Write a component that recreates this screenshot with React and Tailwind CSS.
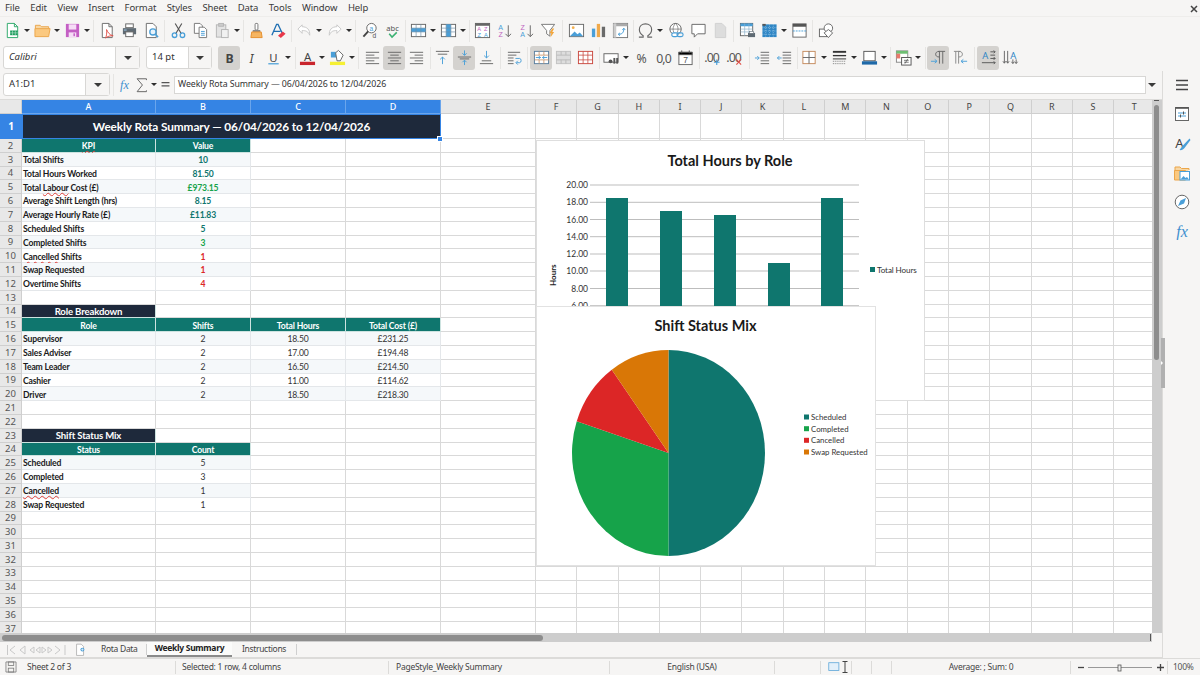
import React from 'react';

const B = '#4a9fd8';
const icons = {
  new: <><path d="M3.5 1.5h7.5l3.5 3.5v11.5h-11z" fill="#fff" stroke="#2aa868"/><path d="M11 1.5V5h3.5" fill="none" stroke="#2aa868"/><rect x="6.5" y="9" width="8" height="5" fill="#1f9d5f"/><path d="M9 9v5M12 9v5M6.5 11.5h8" stroke="#bfe6d2" strokeWidth=".6"/></>,
  open: <><path d="M1.5 7V3.5h5L8 5h7.5v2" fill="#f8d7a4" stroke="#eba64a"/><path d="M1 15.5V7h16l-1.5 8.5z" fill="#fbc980" stroke="#eba64a"/></>,
  save: <><rect x="2" y="2" width="14" height="14" fill="#c45fc4"/><rect x="5" y="2.5" width="8" height="5.5" fill="#f6dcf6"/><rect x="5" y="11" width="8" height="5" fill="#f6dcf6"/><rect x="10" y="12" width="1.6" height="3" fill="#c45fc4"/></>,
  pdf: <><path d="M3.5 1.5h7l3.5 3.5v11.5H3.5z" fill="#fff" stroke="#6a6a6a"/><path d="M10.5 1.5V5H14" fill="none" stroke="#6a6a6a"/><path d="M8 8c1.5 3 3 6 7 6.500-3 0-6 .5-8 2.500 1-2.500 1.500-5.500 1-9z" fill="none" stroke="#e0524a"/></>,
  print: <><rect x="5" y="2" width="8" height="4" fill="#fff" stroke="#666"/><path d="M2 6.500h14v6.500H2z" fill="#5f6a73"/><rect x="5" y="10.500" width="8" height="5" fill="#fff" stroke="#666"/><rect x="3" y="8" width="3" height="1" fill="#9fc8e8"/></>,
  preview: <><path d="M3.500 1.500h7l3.500 3.500v11.500H3.500z" fill="#fff" stroke="#6a6a6a"/><circle cx="10.500" cy="10.500" r="3.300" fill="#e8f3fb" stroke={B} strokeWidth="1.400"/><path d="M13 13l3 3" stroke={B} strokeWidth="1.600"/></>,
  cut: <><path d="M5.500 1.500l6.500 11M12.500 1.500L6 12.500" stroke="#555" strokeWidth="1.200"/><circle cx="4.800" cy="14" r="2.400" fill="none" stroke={B} strokeWidth="1.400"/><circle cx="13.200" cy="14" r="2.400" fill="none" stroke={B} strokeWidth="1.400"/></>,
  copy: <><path d="M2.500 1.500h6l2.500 2.500v8H2.500z" fill="#fff" stroke="#777"/><path d="M7.500 5.500h5.500l2.500 2.500v8.500h-8z" fill="#fff" stroke="#777"/><path d="M9.500 10h4M9.500 12h4M9.500 14h4" stroke={B}/></>,
  paste: <><rect x="2.500" y="3" width="10" height="13" fill="#e3e3e3" stroke="#b5b5b5"/><rect x="5" y="1.500" width="5" height="3" fill="#ccc" stroke="#b5b5b5"/><rect x="8" y="8" width="7" height="8.500" fill="#f1f1f1" stroke="#b5b5b5"/></>,
  brush: <><rect x="7.500" y="1.500" width="3" height="7" rx="1" fill="#fff" stroke="#777"/><path d="M5 8.500h8v2H5z" fill="#888"/><path d="M4 10.500h10l1 6H3z" fill="#f5b562" stroke="#e58e2c"/></>,
  clear: <><path d="M2 14L7 2.500h1.500L13 12M4 10h7" fill="none" stroke="#1f6fb2" strokeWidth="1.400"/><path d="M8.500 14.500l5-4.500 3 2.500-5 4.500z" fill="#e8384a"/></>,
  undo: <><path d="M6.500 3L2 7.500 6.500 12V9c4 0 6.500 1 8 5 .5-6-3-9-8-9z" fill="#fff" stroke="#c8c8c8"/></>,
  redo: <><path d="M11.500 3L16 7.500 11.500 12V9c-4 0-6.500 1-8 5-.5-6 3-9 8-9z" fill="#fff" stroke="#c8c8c8"/></>,
  find: <><circle cx="10" cy="6.500" r="5" fill="#fff" stroke="#666"/><path d="M6.500 10L1.500 15.500" stroke="#444" strokeWidth="2"/><text x="10" y="9" fontSize="7" textAnchor="middle" fill={B} fontFamily="Liberation Sans">a</text><text x="13" y="17" fontSize="7" textAnchor="middle" fill="#555" fontFamily="Liberation Sans">d</text></>,
  spell: <><text x="9" y="9" fontSize="8" textAnchor="middle" fill="#555" fontFamily="Noto Sans">abc</text><path d="M5.500 12.500l3 3.500 5-5" fill="none" stroke="#3bb273" strokeWidth="1.600"/></>,
  rows: <><rect x="1.500" y="2.500" width="15" height="13" fill="#fff" stroke="#666"/><rect x="1.500" y="6.500" width="15" height="4" fill={B}/><path d="M1.500 6.500h15M1.500 10.500h15M6.500 2.500v13M11.500 2.500v13" stroke="#6f8fa8" strokeWidth=".7"/></>,
  cols: <><rect x="1.500" y="2.500" width="15" height="13" fill="#fff" stroke="#666"/><rect x="6.500" y="2.500" width="5" height="13" fill={B}/><path d="M1.500 6.500h15M1.500 10.500h15M6.500 2.500v13M11.500 2.500v13" stroke="#6f8fa8" strokeWidth=".7"/></>,
  sort: <><rect x="1.500" y="1.500" width="15" height="15" fill="#fff" stroke="#666"/><rect x="1.500" y="1.500" width="15" height="2.500" fill="#666"/><text x="5.500" y="10" fontSize="6" textAnchor="middle" fill="#c063c0" fontFamily="Liberation Sans">A</text><text x="5.500" y="15.500" fontSize="6" textAnchor="middle" fill={B} fontFamily="Liberation Sans">Z</text><text x="12.500" y="10" fontSize="6" textAnchor="middle" fill="#c063c0" fontFamily="Liberation Sans">Z</text><text x="12.500" y="15.500" fontSize="6" textAnchor="middle" fill={B} fontFamily="Liberation Sans">A</text></>,
  asc: <><text x="5" y="8" fontSize="7.500" textAnchor="middle" fill={B} fontFamily="Liberation Sans">A</text><text x="5" y="16" fontSize="7.500" textAnchor="middle" fill="#c063c0" fontFamily="Liberation Sans">Z</text><path d="M13 3.500v12M10 12.500l3 3 3-3" fill="none" stroke="#666"/></>,
  desc: <><text x="5" y="8" fontSize="7.500" textAnchor="middle" fill="#c063c0" fontFamily="Liberation Sans">Z</text><text x="5" y="16" fontSize="7.500" textAnchor="middle" fill={B} fontFamily="Liberation Sans">A</text><path d="M13 3.500v12M10 12.500l3 3 3-3" fill="none" stroke="#666"/></>,
  filter: <><path d="M1.500 2.500h14L10.500 9v6L7 12.500V9z" fill="#fff" stroke="#777"/><path d="M13 7l-3 5h2l-1 4.500 4-6h-2l2-3.500z" fill="#f2a63c"/></>,
  image: <><rect x="1.500" y="2.500" width="15" height="13" fill="#fff" stroke="#6a6a6a"/><circle cx="5.500" cy="6" r="1.500" fill="#f4b04e"/><path d="M2 15l5-5 3 3 2.500-2 3.500 4z" fill={B}/></>,
  chart: <><rect x="2" y="7" width="3.500" height="9" fill={B}/><rect x="7.200" y="2" width="3.500" height="14" fill="#f0a94a"/><rect x="12.500" y="5" width="3.500" height="11" fill="#6a6a6a"/></>,
  pivot: <><rect x="1.500" y="1.500" width="15" height="15" fill="#fff" stroke="#777"/><rect x="1.500" y="1.500" width="15" height="3" fill="#aaa"/><rect x="1.500" y="1.500" width="3" height="15" fill="#ccc"/><path d="M7 13c4 0 5.500-2 5.500-6M11 8.500l1.500-2 1.500 2M8.500 11.500L6.500 13l2 1.500" fill="none" stroke={B}/></>,
  omega: <><path d="M2 16h4.500v-1.500C4 13 2.500 10.500 2.500 8 2.500 4.500 5.300 2 9 2s6.500 2.500 6.500 6c0 2.500-1.500 5-4 6.500V16H16" fill="none" stroke="#666" strokeWidth="1.200"/></>,
  link: <><circle cx="8" cy="7.500" r="6" fill="#fff" stroke="#666"/><path d="M2 7.500h12M8 1.500c-3.500 3.500-3.500 8.500 0 12M8 1.500c3.500 3.500 3.500 8.500 0 12" fill="none" stroke="#666" strokeWidth=".7"/><rect x="4" y="11.500" width="6.500" height="4" rx="2" fill="#fff" stroke={B} strokeWidth="1.200"/><rect x="9.500" y="11.500" width="6.500" height="4" rx="2" fill="none" stroke={B} strokeWidth="1.200"/></>,
  comment: <><path d="M2 2.500h14v10H8l-3.500 3.500v-3.500H2z" fill="#fff" stroke="#666"/></>,
  hdoc: <><path d="M3.500 1.500h7l4 4v11h-11z" fill="#ddd" stroke="#d0d0d0"/></>,
  parea: <><rect x="1.500" y="1.500" width="13" height="13" fill="#fff" stroke="#666"/><rect x="1.500" y="1.500" width="13" height="3" fill="#4a9fd8"/><path d="M1.500 7.500h13M1.500 10.500h13M6 1.500v13M10.500 1.500v13" stroke="#8ab0c8" strokeWidth=".7"/><path d="M9.500 11.500h7.500v4.500H9.500z" fill="#5f6a73"/><rect x="11" y="10" width="4.500" height="2" fill="#fff" stroke="#5f6a73" strokeWidth=".6"/></>,
  freeze: <><rect x="1.500" y="2.500" width="15" height="13.500" fill="#2f86c5"/><path d="M1.500 6h15M1.500 9.500h15M1.500 13h15M5 2.500V16M9 2.500V16M13 2.500V16" stroke="#bcdcf0" strokeWidth=".6" strokeDasharray="1 1"/><rect x="1.500" y="2" width="3.500" height="2" fill="#555"/></>,
  split: <><rect x="2" y="2" width="14" height="14" fill="#fff" stroke="#666"/><rect x="2" y="2" width="14" height="3" fill="#555"/><path d="M2 9.500h14" stroke={B} strokeDasharray="2 1"/></>,
  draw: <><rect x="1.500" y="7.500" width="8" height="8" fill="#fff" stroke="#666"/><circle cx="11" cy="6.500" r="4.500" fill="#fff" stroke="#666"/><path d="M11 8l4.500 3.500-4.500 5-4.500-5z" fill="#fff" stroke="#666"/></>,
  bold: <text x="9" y="14.500" fontSize="13" fontWeight="700" textAnchor="middle" fill="#444" fontFamily="Noto Sans">B</text>,
  italic: <text x="9" y="14.500" fontSize="13" fontStyle="italic" textAnchor="middle" fill="#444" fontFamily="Noto Sans">I</text>,
  under: <><text x="9" y="13.500" fontSize="12" textAnchor="middle" fill="#444" fontFamily="Noto Sans">U</text><rect x="3.500" y="15" width="11" height="1.300" fill={B}/></>,
  fcolor: <><text x="9" y="13" fontSize="12" textAnchor="middle" fill="#444" fontFamily="Noto Sans">A</text><rect x="1" y="13.500" width="16" height="3.500" fill="#c9252d"/></>,
  hcolor: <><rect x="1" y="13.500" width="16" height="3.500" fill="#f6f033"/><rect x="2" y="3" width="6" height="6" fill={B}/><path d="M7 4l3-2.500 5 5-3 6H8.500z" fill="#fff" stroke="#666"/></>,
  al: <path d="M2 3.500h14M2 6.500h9M2 9.500h14M2 12.500h9M2 15.500h14" stroke="#666"/>,
  ac: <path d="M2 3.500h14M4.500 6.500h9M2 9.500h14M4.500 12.500h9M2 15.500h14" stroke="#666"/>,
  ar: <path d="M2 3.500h14M7 6.500h9M2 9.500h14M7 12.500h9M2 15.500h14" stroke="#666"/>,
  vt: <><path d="M2 2.500h14M4 5.500h10" stroke="#666"/><path d="M9 16V8.500M6.500 11L9 8.500l2.500 2.500" fill="none" stroke={B}/></>,
  vc: <><path d="M2 8.500h14M4 10.500h10" stroke="#666"/><path d="M9 1.500v5M6.800 4.500L9 6.800l2.200-2.300M9 17v-5M6.800 14L9 11.800l2.200 2.200" fill="none" stroke={B}/></>,
  vb: <><path d="M4 12.500h10M2 15.500h14" stroke="#666"/><path d="M9 2v7.500M6.500 7L9 9.500 11.500 7" fill="none" stroke={B}/></>,
  wrap: <><path d="M2 3.500h13M2 6.500h9M2 9.500h6M2 12.500h6M2 15.500h6" stroke="#666"/><path d="M10 10h4.500c2 0 2 4.500 0 4.500H11M12.500 12.500l-2 2 2 2" fill="none" stroke={B}/></>,
  merge: <><rect x="1.500" y="2.500" width="15" height="13" fill="#fff" stroke="#5a7fa0"/><path d="M1.500 6.500h15M1.500 11.500h15M6.500 2.500v4M11.500 2.500v4M6.500 11.500v4M11.500 11.500v4" stroke="#c58a5c" strokeWidth=".8"/><path d="M3 9h5M10 9h5M6 7.500L8 9 6 10.500M12 7.500L10 9l2 1.500" fill="none" stroke={B}/></>,
  mergeg: <><rect x="1.500" y="2.500" width="15" height="13" fill="#ddd" stroke="#c2c2c2"/><path d="M1.500 6.500h15M1.500 11.500h15M6.500 2.500v4M11.500 2.500v4M6.500 11.500v4M11.500 11.500v4" stroke="#bbb"/></>,
  splitc: <><rect x="1.500" y="2.500" width="15" height="13" fill="#fff" stroke="#c9483f"/><path d="M1.500 6.500h15M1.500 11.500h15M6.500 2.500v13M11.500 2.500v13" stroke="#c9483f" strokeWidth=".8"/></>,
  curr: <><rect x="1" y="5" width="15" height="9" fill="#fff" stroke="#666"/><circle cx="8" cy="13" r="2" fill="#555"/><rect x="11" y="9.500" width="2" height="6" fill="#555"/><rect x="14" y="9.500" width="2" height="6" fill="#555"/></>,
  pct: <text x="9" y="14.500" fontSize="13" textAnchor="middle" fill="#555" fontFamily="Noto Sans">%</text>,
  num: <text x="9" y="14.500" fontSize="13" textAnchor="middle" fill="#555" fontFamily="Noto Sans" letterSpacing="-1">0,0</text>,
  date: <><rect x="2" y="3.500" width="14" height="13" fill="#fff" stroke="#666"/><path d="M2 3.500h14v2.500H2zM5 1.500v3M13 1.500v3" stroke="#555"/><text x="9" y="15" fontSize="9" textAnchor="middle" fill="#555" fontFamily="Liberation Sans">7</text></>,
  addd: <><text x="8" y="14" fontSize="13" textAnchor="middle" fill="#555" fontFamily="Noto Sans" letterSpacing="-1">.00</text><path d="M13.500 11v6M10.500 14h6" stroke={B} strokeWidth="1.200"/></>,
  deld: <><text x="8" y="14" fontSize="13" textAnchor="middle" fill="#555" fontFamily="Noto Sans" letterSpacing="-1">.00</text><path d="M11 11l5 5.500M16 11l-5 5.500" stroke="#e0524a" strokeWidth="1.200"/></>,
  ind: <><path d="M7 3.500h9M7 6.500h9M7 9.500h9M7 12.500h9M7 15.500h9" stroke="#666"/><path d="M1 9.500h4.500M3.500 7.500l2 2-2 2" fill="none" stroke={B}/></>,
  ded: <><path d="M7 3.500h9M7 6.500h9M7 9.500h9M7 12.500h9M7 15.500h9" stroke="#666"/><path d="M6 9.500H1.500M3.500 7.500l-2 2 2 2" fill="none" stroke={B}/></>,
  bord: <><rect x="2" y="2.500" width="13" height="13" fill="#fff" stroke="#c58a5c"/><path d="M8.500 2.500v13M2 9h13" stroke="#666"/></>,
  bstyle: <><path d="M2 3h14" stroke="#333" strokeWidth="2"/><path d="M2 7h14" stroke="#333" strokeWidth="1.400"/><path d="M2 10.500h14" stroke="#333"/><path d="M2 13h14M2 15.500h14" stroke="#777" strokeDasharray="1 1"/></>,
  bcolor: <><rect x="3" y="2.500" width="12" height="10" fill="#fff" stroke="#555"/><rect x="1" y="13" width="16" height="3.500" fill="#1f69a8"/></>,
  cond: <><rect x="1.500" y="2" width="12" height="12" fill="#fff" stroke="#888"/><rect x="1.500" y="2" width="12" height="3" fill="#6fbf73"/><rect x="1.500" y="5" width="4" height="5" fill="#e87a6c"/><rect x="7" y="9" width="10" height="8" fill="#fff" stroke="#555"/><path d="M9.500 12h5M9.500 14h5M13.500 10.500l-3 5" stroke="#555" strokeWidth=".8"/></>,
  ltr: <><path d="M9 2.500h7M10 2.500v13M13.500 2.500v13M10 2.500C7 2.500 6 4 6 5.500S7 8.500 10 8.500" fill="none" stroke="#666"/><path d="M1 13h6M5 11l2.500 2L5 15" fill="none" stroke={B}/></>,
  rtl: <><path d="M2 2.500h7M4 2.500v13M7 2.500v13M7 2.500c3 0 4 1.500 4 3S10 8.500 7 8.500" fill="none" stroke="#888"/><path d="M16 13h-6M12 11l-2.500 2 2.500 2" fill="none" stroke={B}/></>,
  th: <><text x="5.500" y="11" fontSize="10" textAnchor="middle" fill="#2f86c5" fontFamily="Noto Sans">A</text><path d="M11 3h5M11 6.500h5M11 10h5M2 14.500h14" fill="none" stroke="#555"/><path d="M14.500 1.500L16 3l-1.500 1.500M14.500 8.500L16 10l-1.500 1.500M14.500 13L16 14.500 14.500 16" fill="none" stroke="#555"/></>,
  tv: <><text x="12" y="10.700" fontSize="10" textAnchor="middle" fill="#2f86c5" fontFamily="Noto Sans">A</text><path d="M2.500 2v13M6 2v13M11.500 11v4M15 11v4" stroke="#666"/><path d="M1 13l1.500 2L4 13M4.500 13L6 15l1.500-2M10 13.500l1.500 2 1.500-2M13.500 13.500l1.500 2 1.500-2" fill="none" stroke="#666"/></>,
  fx: <text x="9" y="14" fontSize="13" fontStyle="italic" textAnchor="middle" fill="#3d8fcf" fontFamily="Liberation Serif">fx</text>,
  sum: <path d="M14 3.500V2H3.500l6 7-6 7.500H14V15" fill="none" stroke="#666" strokeWidth="1.100"/>,
  eq: <path d="M3.500 6.500h11M3.500 11h11" stroke="#555" strokeWidth="1.800"/>,
  burger: <path d="M3 4.500h12M3 9h12M3 13.500h12" stroke="#444" strokeWidth="1.500"/>,
  props: <><rect x="2.500" y="2.500" width="13" height="13" fill="#fff" stroke="#666"/><rect x="2.500" y="2" width="13" height="1.800" fill="#555"/><path d="M5 8h8M5 11h8" stroke={B}/><path d="M10.500 6.500v3M7.500 9.500v3" stroke="#555"/></>,
  styles: <><text x="6.500" y="14" fontSize="13" textAnchor="middle" fill="#444" fontFamily="Noto Sans">A</text><path d="M16.500 4.500L9.500 12c-1 1-2 3-3 4 2 .5 4-.5 5-2l6-8z" fill={B}/></>,
  gallery: <><path d="M2 15.500V3h5l1.500 1.500h7.500V6" fill="#f8d7a4" stroke="#eba64a"/><path d="M1.500 6.500h11V16h-11z" fill="#fbc980" stroke="#eba64a"/><rect x="7" y="7.500" width="9.500" height="8.500" fill="#fff" stroke={B}/><path d="M7.500 15.500l3-3.500 2 2 1.500-1 2 2.500z" fill={B}/></>,
  nav: <><circle cx="9" cy="9" r="6.800" fill="#fff" stroke="#666"/><path d="M13 5l-2 5.500L5 13l2.500-5.500z" fill={B}/></>,
  fxs: <text x="9" y="14.500" fontSize="16" fontStyle="italic" textAnchor="middle" fill="#3d8fcf" fontFamily="Liberation Serif">fx</text>,
  saved: <><path d="M2.500 2.500h13v13h-13z" fill="#f4f3f1" stroke="#777"/><rect x="5.500" y="2.500" width="7" height="4.500" fill="none" stroke="#777"/><rect x="5.500" y="10.500" width="7" height="5" fill="none" stroke="#777"/></>,
  newtab: <><path d="M2 1.500h6l3 3v11.500H2z" fill="#fff" stroke="#aaa"/><circle cx="9.500" cy="8.500" r="2.500" fill="#4a9fd8"/><path d="M9.500 7v3M8 8.500h3" stroke="#fff" strokeWidth=".8"/></>,
  docsel: <><rect x="1" y="3.500" width="13" height="10" fill="#e3f0fa" stroke="#5aa5d8"/></>,
};

function Ico({ n, size = 18 }) {
  return <svg width={size} height={size} viewBox="0 0 18 18" className="block shrink-0">{icons[n]}</svg>;
}
function I({ n, on }) {
  return (
    <div className={`w-[22px] h-[24px] shrink-0 flex items-center justify-center rounded-[3px] ${on ? 'bg-[#d4d2cf]' : ''}`}>
      <Ico n={n} size={17} />
    </div>
  );
}
function D() {
  return (
    <div className="w-[8px] shrink-0 flex items-center justify-center">
      <div className="w-0 h-0 border-x-[3px] border-t-[3px] border-x-transparent border-t-[#2e2e2e]" />
    </div>
  );
}
function S({ className }) {
  return <div className={`w-px h-[22px] shrink-0 bg-[#e6e5e3] ${className}`} />;
}
function Caret() {
  return <div className="w-0 h-0 border-x-[4px] border-t-[4px] border-x-transparent border-t-[#3a3a3a]" />;
}
function Combo({ w, dw, text, italic }) {
  return (
    <div className={`${w} h-[23px] shrink-0 flex bg-white border border-[#d8d7d5] rounded-[3px]`}>
      <div className={`flex-1 flex items-center pl-[5px] text-[9.5px] text-[#333] ${italic ? 'italic' : ''}`}>{text}</div>
      <div className={`${dw} flex items-center justify-center bg-[#f6f5f4] border-l border-[#d8d7d5]`}><Caret /></div>
    </div>
  );
}

const MENU = ['File', 'Edit', 'View', 'Insert', 'Format', 'Styles', 'Sheet', 'Data', 'Tools', 'Window', 'Help'];

function Toolbar1() {
  return (
    <div className="flex items-center h-[27px] pl-px">
      <I n="new" /><D /><I n="open" /><D /><I n="save" /><D />
      <S className="ml-[2px] mr-[2px]" />
      <I n="pdf" /><I n="print" /><I n="preview" />
      <S className="ml-[2px] mr-[2px]" />
      <I n="cut" /><I n="copy" /><I n="paste" /><D />
      <S className="ml-[2px] mr-px" />
      <I n="brush" /><I n="clear" />
      <S className="ml-[2px] mr-px" />
      <I n="undo" /><D /><I n="redo" /><D />
      <S className="ml-[2px] mr-[3px]" />
      <I n="find" /><I n="spell" />
      <S className="ml-[2px] mr-px" />
      <I n="rows" /><D /><I n="cols" /><D />
      <S className="ml-[2px] mr-px" />
      <I n="sort" /><I n="asc" /><I n="desc" /><I n="filter" />
      <S className="ml-[3px] mr-[2px]" />
      <I n="image" /><I n="chart" /><I n="pivot" />
      <S className="ml-[2px]" />
      <I n="omega" /><D /><div className="w-px" /><I n="link" /><I n="comment" /><I n="hdoc" />
      <S className="ml-[2px] mr-[2px]" />
      <I n="parea" /><I n="freeze" /><D /><I n="split" />
      <S className="ml-[2px] mr-[2px]" />
      <I n="draw" />
    </div>
  );
}
function Toolbar2() {
  return (
    <div className="flex items-center h-[27px] pl-[3px]">
      <Combo w="w-[137px]" dw="w-[24px]" text="Calibri" italic />
      <div className="w-[6px]" />
      <Combo w="w-[66px]" dw="w-[23px]" text="14 pt" />
      <div className="w-[6px]" />
      <I n="bold" on /><I n="italic" /><I n="under" /><D />
      <S className="ml-[3px]" />
      <I n="fcolor" /><D /><I n="hcolor" /><D />
      <S className="ml-[2px] mr-[2px]" />
      <I n="al" /><I n="ac" on /><I n="ar" />
      <S className="ml-[3px]" />
      <I n="vt" /><I n="vc" on /><I n="vb" />
      <S className="ml-[3px] mr-[2px]" />
      <I n="wrap" />
      <S className="ml-[2px] mr-[2px]" />
      <I n="merge" on /><I n="mergeg" /><I n="splitc" />
      <S className="ml-[3px]" />
      <I n="curr" /><D /><I n="pct" /><I n="num" /><I n="date" />
      <S className="ml-[3px] mr-px" />
      <I n="addd" /><I n="deld" />
      <S className="ml-[4px] mr-px" />
      <I n="ind" /><I n="ded" />
      <S className="ml-[2px]" />
      <I n="bord" /><D /><I n="bstyle" /><D /><I n="bcolor" /><D />
      <S className="ml-[2px] mr-px" />
      <I n="cond" /><D />
      <S className="ml-[3px] mr-px" />
      <I n="ltr" on /><I n="rtl" />
      <S className="ml-[3px] mr-[2px]" />
      <I n="th" on /><I n="tv" />
    </div>
  );
}

function FormulaBar() {
  return (
    <div className="h-[29px] flex items-center pl-[3px] pr-[4px] pb-[1px] border-b border-[#dcdbd9]">
      <Combo w="w-[107px]" dw="w-[24px]" text="A1:D1" />
      <div className="w-px h-[22px] bg-[#e6e5e3] ml-[3px]" />
      <div className="w-[20px] flex justify-center"><Ico n="fx" size={17} /></div>
      <div className="w-[16px] flex justify-center"><Ico n="sum" size={16} /></div>
      <D />
      <div className="w-[17px] -ml-[1px] flex justify-center"><Ico n="eq" size={13} /></div>
      <div className="flex-1 h-[18px] bg-white border border-[#d8d7d5] flex items-center pl-[3px] text-[8.8px] tracking-[-0.1px] text-[#333] whitespace-nowrap">Weekly Rota Summary — 06/04/2026 to 12/04/2026</div>
      <div className="w-[12px] flex justify-center"><Caret /></div>
    </div>
  );
}

const COLS = [
  ['A', 'w-[134px]'], ['B', 'w-[95px]'], ['C', 'w-[95px]'], ['D', 'w-[95px]'], ['E', 'w-[95px]'],
  ['F', 'w-[41.3px]'], ['G', 'w-[41.3px]'], ['H', 'w-[41.3px]'], ['I', 'w-[41.3px]'], ['J', 'w-[41.3px]'],
  ['K', 'w-[41.3px]'], ['L', 'w-[41.3px]'], ['M', 'w-[41.3px]'], ['N', 'w-[41.3px]'], ['O', 'w-[41.3px]'],
  ['P', 'w-[41.3px]'], ['Q', 'w-[41.3px]'], ['R', 'w-[41.3px]'], ['S', 'w-[41.3px]'], ['T', 'w-[41.3px]'],
];
const NAVY = 'bg-[#1e293b] text-white !text-[9.6px] tracking-[-0.05px] justify-center font-bold';
const TEAL = 'bg-[#0f766e] text-white font-bold justify-center';
const LBL = 'font-bold text-[#1a1a1a] justify-start pl-px';
const MID = 'text-[#333] justify-center';
const T = 'text-[#0f766e] font-bold justify-center';
const GR = 'text-[#16a34a] font-bold justify-center';
const R = 'text-[#dc2626] font-bold justify-center';
const Sp = ({ children }) => <span className="underline decoration-wavy decoration-[#e0403a] decoration-1">{children}</span>;

const kpi = (l, v, c) => [[l, LBL], [v, c]];
const role = (a, b, c, d) => [[a, LBL], [b, MID], [c, MID], [d, MID]];
const DATA = {
  2: [[<Sp>KPI</Sp>, TEAL], ['Value', TEAL]],
  3: kpi('Total Shifts', '10', T),
  4: kpi('Total Hours Worked', '81.50', T),
  5: kpi(<>Total <Sp>Labour</Sp> Cost (£)</>, '£973.15', GR),
  6: kpi('Average Shift Length (hrs)', '8.15', T),
  7: kpi('Average Hourly Rate (£)', '£11.83', T),
  8: kpi('Scheduled Shifts', '5', T),
  9: kpi('Completed Shifts', '3', GR),
  10: kpi(<><Sp>Cancelled</Sp> Shifts</>, '1', R),
  11: kpi('Swap Requested', '1', R),
  12: kpi('Overtime Shifts', '4', R),
  14: [['Role Breakdown', NAVY]],
  15: [['Role', TEAL], ['Shifts', TEAL], ['Total Hours', TEAL], ['Total Cost (£)', TEAL]],
  16: role('Supervisor', '2', '18.50', '£231.25'),
  17: role('Sales Adviser', '2', '17.00', '£194.48'),
  18: role('Team Leader', '2', '16.50', '£214.50'),
  19: role('Cashier', '2', '11.00', '£114.62'),
  20: role('Driver', '2', '18.50', '£218.30'),
  23: [['Shift Status Mix', NAVY]],
  24: [['Status', TEAL], ['Count', TEAL]],
  25: kpi('Scheduled', '5', MID),
  26: kpi('Completed', '3', MID),
  27: kpi(<Sp>Cancelled</Sp>, '1', MID),
  28: kpi('Swap Requested', '1', MID),
};
const BANDED = new Set([3, 5, 7, 9, 11, 16, 18, 20, 25, 27]);

function Row({ n }) {
  const d = DATA[n] || [];
  const band = BANDED.has(n);
  return (
    <div className="flex h-[13.8px] shrink-0">
      <div className="w-[22px] shrink-0 flex items-center justify-center pt-px bg-[#e8e8e8] border-r border-b border-[#cfcfcf] text-[9.5px] text-[#555] [font-family:'Noto_Sans',sans-serif]">{n}</div>
      {COLS.map(([c, w], i) => {
        const cell = d[i];
        return (
          <div key={c} className={`${w} shrink-0 flex items-center pt-[1.5px] whitespace-nowrap text-[8.6px] tracking-[-0.15px] leading-[12px] border-r border-b ${cell && cell[1] !== NAVY && cell[1] !== TEAL ? 'border-[#e4e7ea]' : cell ? 'border-[#cde3e0]' : 'border-[#d9d9d9]'} ${cell && band ? 'bg-[#f5f8fa]' : ''} ${cell ? cell[1] : ''}`}>
            {cell ? <span>{cell[0]}</span> : null}
          </div>
        );
      })}
    </div>
  );
}

function BarChart() {
  const ticks = [[20, 185], [18, 202.3], [16, 219.5], [14, 236.7], [12, 254], [10, 271], [8, 288.5], [6, 305.7]];
  const bars = [[606, 198], [660, 211], [714, 215], [768, 263], [821, 198]];
  return (
    <div className="absolute left-[536px] top-[40px] w-[389px] h-[261px] bg-white border border-[#dedede]">
      <svg width="387" height="259" viewBox="537 141 387 259" className="block" fontFamily="Lato">
        <text x="730" y="166" fontSize="14.500" fontWeight="700" textAnchor="middle" fill="#1a1a1a">Total Hours by Role</text>
        {ticks.map(([v, y]) => (
          <g key={v}>
            <path d={`M590 ${y}H859`} stroke="#bdbdbd" />
            <text x="588" y={y + 3} fontSize="8.500" textAnchor="end" fill="#333">{v}.00</text>
          </g>
        ))}
        {bars.map(([x, y]) => <rect key={x} x={x} y={y} width="22" height={340 - y} fill="#0f766e" />)}
        <text transform="translate(556 286) rotate(-90)" fontSize="8" fontWeight="700" fill="#1a1a1a">Hours</text>
        <rect x="870" y="267" width="5" height="5" fill="#0f766e" />
        <text x="877" y="272.500" fontSize="8.100" letterSpacing="-0.1" fill="#333">Total Hours</text>
      </svg>
    </div>
  );
}

function PieChart() {
  const cx = 668.5, cy = 453, rx = 96.5, ry = 103;
  const pt = (f) => [cx + rx * Math.sin(f * 2 * Math.PI), cy - ry * Math.cos(f * 2 * Math.PI)];
  const slices = [[0, .5, '#0f766e'], [.5, .8, '#16a34a'], [.8, .9, '#dc2626'], [.9, 1, '#d97706']];
  const legend = [['Scheduled', '#0f766e', 417], ['Completed', '#16a34a', 428.7], ['Cancelled', '#dc2626', 440.3], ['Swap Requested', '#d97706', 452]];
  return (
    <div className="absolute left-[536px] top-[206px] w-[340px] h-[260px] bg-white border border-[#e2e2e2]">
      <svg width="338" height="258" viewBox="537 307 338 258" className="block" fontFamily="Lato">
        <text x="705.500" y="331" fontSize="14.500" fontWeight="700" textAnchor="middle" fill="#1a1a1a">Shift Status Mix</text>
        {slices.map(([a, b, c]) => {
          const [x1, y1] = pt(a), [x2, y2] = pt(b);
          return <path key={c} d={`M${cx} ${cy}L${x1} ${y1}A${rx} ${ry} 0 0 1 ${x2} ${y2}Z`} fill={c} />;
        })}
        {legend.map(([t, c, y]) => (
          <g key={t}>
            <rect x="804" y={y - 2.500} width="5" height="5" fill={c} />
            <text x="811" y={y + 3} fontSize="7.800" fill="#333">{t}</text>
          </g>
        ))}
      </svg>
    </div>
  );
}

function Grid() {
  return (
    <div className="relative w-[1152px] h-[533px] overflow-hidden bg-white">
      <div className="flex h-[14px] [font-family:'Noto_Sans',sans-serif]">
        <div className="w-[22px] shrink-0 bg-[#e8e8e8] border-r border-b border-[#cfcfcf]" />
        {COLS.map(([c, w], i) => (
          <div key={c} className={`${w} shrink-0 flex items-center justify-center text-[9px] border-r border-b ${i < 4 ? 'bg-[#3584e4] text-white border-[#6aa5ec] font-medium' : 'bg-[#e8e8e8] text-[#444] border-[#cfcfcf]'}`}>{c}</div>
        ))}
      </div>
      <div className="flex h-[25px]">
        <div className="w-[22px] shrink-0 flex items-center justify-center bg-[#3584e4] text-white text-[10px] font-bold [font-family:'Noto_Sans',sans-serif]">1</div>
        <div className="w-[419px] shrink-0 flex items-center justify-center bg-[#1e293b] text-white font-bold text-[11.8px] border border-[#3584e4] tracking-[-0.1px]">Weekly Rota Summary — 06/04/2026 to 12/04/2026</div>
        <div className="w-[95px] shrink-0 border-r border-b border-[#d9d9d9]" />
        {COLS.slice(5).map(([c, w]) => <div key={c} className={`${w} shrink-0 border-r border-b border-[#d9d9d9]`} />)}
      </div>
      {Array.from({ length: 36 }, (_, i) => <Row key={i} n={i + 2} />)}
      <div className="absolute left-[437px] top-[36px] w-[4px] h-[4px] bg-[#3584e4] border border-white box-content" />
      <BarChart />
      <PieChart />
    </div>
  );
}

function VScroll() {
  return (
    <div className="relative w-[10px] h-[533px] bg-[#cdcdcd] pl-[2px] pt-[5px]">
      <div className="absolute left-[2px] top-0 w-[5px] h-px bg-[#555]" />
      <div className="w-[5px] h-[255px] bg-[#8d8d8d] rounded-full" />
      <div className="absolute left-[9px] top-[238px] w-[4px] h-[50px] bg-[#b0b0b0] flex items-center"><div className="w-0 h-0 border-y-[2px] border-l-[2px] border-y-transparent border-l-white" /></div>
    </div>
  );
}

function HScroll() {
  return (
    <div className="h-[9px] w-[1152px] bg-[#cdcdcd] pl-[2px] flex items-center justify-between pr-[1px]">
      <div className="w-[541px] h-[6px] bg-[#8d8d8d] rounded-full" />
      <div className="w-px h-[7px] bg-[#555]" />
    </div>
  );
}

function Tabs() {
  return (
    <div className="h-[16px] flex items-stretch text-[8.5px] tracking-[-0.3px] text-[#444] border-b border-[#dcdbd9]">
      <div className="w-[75px] flex items-center pl-[7px] shrink-0">
        <svg width="59" height="12" viewBox="0 0 59 12" fill="none" stroke="#c9c9c9"><path d="M.5 1v10M8 2L3 6l5 4M13 6l5-4v8zM23 6l4-3v6zM29 6l4-3v6zM35 3l4 3-4 3zM41 3l4 3-4 3zM48 2l5 4-5 4M58 1v10" /></svg>
      </div>
      <div className="w-[26px] flex items-center shrink-0"><Ico n="newtab" size={14} /></div>
      <div className="w-[46px] flex items-center shrink-0 border-r border-[#cfcfcf] my-[2px]">Rota Data</div>
      <div className="w-[85px] flex items-center justify-center shrink-0 font-bold text-[#222] bg-[#fbfbfa] border-b-2 border-[#8a8a8a]">Weekly Summary</div>
      <div className="w-[65px] flex items-center justify-center shrink-0 border-r border-[#cfcfcf] my-[2px]">Instructions</div>
    </div>
  );
}

function SideBar() {
  return (
    <div className="w-[38px] shrink-0 border-l border-[#dcdbd9] flex flex-col items-center pt-[5px] gap-[11.2px]">
      <Ico n="burger" /><Ico n="props" /><Ico n="styles" /><Ico n="gallery" /><Ico n="nav" /><Ico n="fxs" />
    </div>
  );
}

const Sb = ({ w, children, className = '' }) => (
  <div className={`${w} shrink-0 h-[13px] flex items-center border-r border-[#dcdbd9] ${className}`}>{children}</div>
);

function Status() {
  return (
    <div className="h-[17px] flex items-center text-[8.5px] tracking-[-0.25px] text-[#444] border-t border-[#dcdbd9] whitespace-nowrap">
      <Sb w="w-[176px]"><div className="ml-[4px] mr-[9px]"><Ico n="saved" size={14} /></div>Sheet 2 of 3</Sb>
      <Sb w="w-[213px]" className="pl-[6px]">Selected: 1 row, 4 columns</Sb>
      <Sb w="w-[221px]" className="pl-[7px]">PageStyle_Weekly Summary</Sb>
      <Sb w="w-[165px]" className="justify-center">English (USA)</Sb>
      <Sb w="w-[46px]" />
      <Sb w="w-[31px]" className="pl-[7px]"><Ico n="docsel" size={14} /><svg width="6" height="12" viewBox="0 0 6 12" fill="none" stroke="#444"><path d="M.5.5h5M.5 11.500h5M3 .5v11" /></svg></Sb>
      <Sb w="w-[20px]" />
      <Sb w="w-[20px]" />
      <Sb w="w-[179px]" className="justify-center">Average: ; Sum: 0</Sb>
      <div className="w-[97px] shrink-0 flex items-center pl-[7px] gap-[3px] border-r border-[#dcdbd9] h-[13px]">
        <svg width="86" height="11" viewBox="0 0 86 11" fill="none" stroke="#444"><path d="M0 5.500h6" strokeWidth="1.300" /><path d="M10 5.500h64" stroke="#999" /><rect x="40" y="3" width="3" height="6" fill="#eee" stroke="#555" strokeWidth=".8" /><path d="M79 5.500h7M82.500 2v7" strokeWidth="1.300" /></svg>
      </div>
      <div className="pl-[5px] text-[#555]">100%</div>
    </div>
  );
}

export default function App() {
  return (
    <div className="w-[1200px] h-[675px] overflow-hidden bg-[#f6f5f4] flex flex-col [font-family:'Noto_Sans',sans-serif]">
      <div className="h-[17px] flex items-center pl-[5px] pt-px gap-[10.5px] text-[9.5px] tracking-[-0.1px] text-[#3a3a3a] relative shrink-0 border-b border-[#eeedeb]">
        {MENU.map((m) => <span key={m}>{m}</span>)}
        <svg className="absolute right-[2px] top-[5px]" width="8" height="8" viewBox="0 0 8 8" stroke="#444" strokeWidth="1.500"><path d="M1 1l6 6M7 1L1 7" /></svg>
      </div>
      <Toolbar1 />
      <Toolbar2 />
      <div className="flex flex-1 min-h-0">
        <div className="w-[1162px] shrink-0 flex flex-col">
          <FormulaBar />
          <div className="flex [font-family:'Lato',sans-serif]">
            <Grid />
            <VScroll />
          </div>
          <HScroll />
          <Tabs />
        </div>
        <SideBar />
      </div>
      <Status />
    </div>
  );
}
